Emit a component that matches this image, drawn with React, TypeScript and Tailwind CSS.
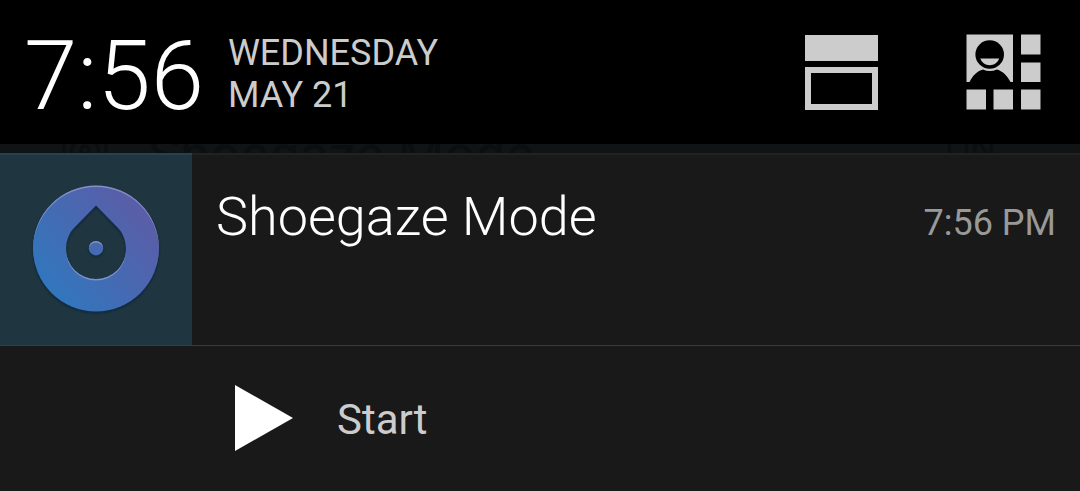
const DROP_RING =
  'M63 1.500a63 63 0 1 1 0 126a63 63 0 1 1 0-126Z M63 21.500L41 44C36 49 33 57 33 65a30 30 0 0 0 60 0C93 57 90 49 85 44Z M63 57a7.200 7.200 0 1 1 0 14.400a7.200 7.200 0 1 1 0-14.400Z';

function NotificationsIcon() {
  return (
    <svg width="73" height="75" viewBox="0 0 73 75" fill="#cccccc" aria-hidden="true">
      <path d="M0 0H73V26H0Z" />
      <path fillRule="evenodd" d="M0 32H73V75H0Z M6 38V69H67V38Z" />
    </svg>
  );
}

function QuickSettingsIcon() {
  return (
    <svg width="75" height="76" viewBox="0 0 75 76" aria-hidden="true">
      <g fill="#cccccc">
        <path d="M.5 .5H47V48H.5Z M55 .5H74.5V20.5H55Z M55 28.500H74.5V48H55Z M55 55.500H74.500V75.500H55Z M27.500 55.500H47V75.500H27.500Z M.5 55.500H20V75.500H.5Z" />
      </g>
      <path d="M3.500 48C7 41 11.500 37 17 35.500Q23.500 38.500 31 35.500C37 37.500 41 41.500 44.500 48Z" fill="#000" />
      <circle cx="23.700" cy="20.500" r="14.300" fill="#000" />
      <path d="M14.300 24.500H33.200C31.500 29 28 31.200 23.700 31.200S16 29 14.300 24.500Z" fill="#cccccc" />
    </svg>
  );
}

function DropletLogo() {
  return (
    <svg width="126" height="130" viewBox="0 0 126 130" className="overflow-visible" role="img" aria-label="Shoegaze">
      <defs>
        <linearGradient id="ring" x1="15" y1="102" x2="106" y2="28" gradientUnits="userSpaceOnUse">
          <stop offset="0" stopColor="#3276bd" />
          <stop offset="1" stopColor="#595ea8" />
        </linearGradient>
        <filter id="shade" x="-10%" y="-10%" width="120%" height="120%">
          <feGaussianBlur stdDeviation="1.200" />
        </filter>
        <mask id="rim">
          <path d={DROP_RING} fill="#fff" fillRule="evenodd" />
          <path d={DROP_RING} fill="#000" fillRule="evenodd" transform="translate(0 1.500)" />
        </mask>
      </defs>
      <path d={DROP_RING} fill="#0c2540" fillRule="evenodd" transform="translate(0 1.500)" filter="url(#shade)" />
      <path d={DROP_RING} fill="url(#ring)" fillRule="evenodd" />
      <rect width="126" height="130" fill="#b5bce2" fillOpacity=".5" mask="url(#rim)" />
    </svg>
  );
}

export default function App() {
  return (
    <div className="flex min-h-screen flex-col bg-[#191919] font-['Roboto',sans-serif]">
      <header className="flex h-36 shrink-0 items-center justify-between bg-black pl-6 pr-[39px]">
        <div className="flex items-center gap-6 pt-1">
          <time className="pt-1 text-[96px] leading-[112px] font-light text-white">7:56</time>
          <p className="text-[36px] leading-[42px] text-[#cccccc]">
            WEDNESDAY
            <br />
            MAY 21
          </p>
        </div>
        <div className="flex items-center gap-22">
          <button type="button" aria-label="Notifications">
            <NotificationsIcon />
          </button>
          <button type="button" aria-label="Quick settings">
            <QuickSettingsIcon />
          </button>
        </div>
      </header>
      <div className="flex h-[9px] shrink-0 items-center justify-between overflow-hidden bg-[#101415] pl-[62px] pr-21 text-[#0c0f0f]" aria-hidden="true">
        <div className="flex items-center gap-10">
          <svg width="46" height="46" viewBox="0 0 46 46" fill="none" stroke="currentColor" strokeWidth="3">
            <rect x="2" y="2" width="42" height="42" />
            <circle cx="23" cy="27" r="14" />
            <circle cx="23" cy="24" r="4" />
          </svg>
          <span className="pt-3 text-[54px] leading-none">Shoegaze Mode</span>
        </div>
        <span className="text-[36px] leading-none">ON</span>
      </div>
      <main className="flex grow flex-col">
        <article className="flex h-[193px] border-b border-[#3a3a3a] shadow-[inset_0_2px_0_#222222]">
          <div className="flex w-48 shrink-0 items-center justify-center bg-[#1f3640] shadow-[inset_0_2px_0_#27424c]">
            <DropletLogo />
          </div>
          <div className="flex grow items-start justify-between pt-8 pl-6 pr-6">
            <h1 className="text-[54px] leading-[64px] font-light text-white">Shoegaze Mode</h1>
            <time className="pt-[17px] text-[36px] leading-[42px] text-[#999999]">7:56 PM</time>
          </div>
        </article>
        <button type="button" className="flex h-36 items-center gap-11 pl-[235px] text-left">
          <svg width="58" height="66" viewBox="0 0 58 66" fill="#fff" aria-hidden="true">
            <path d="M0 0L58 33L0 66Z" />
          </svg>
          <span className="pt-1 text-[42px] leading-[50px] text-[#cccccc]">Start</span>
        </button>
      </main>
    </div>
  );
}
